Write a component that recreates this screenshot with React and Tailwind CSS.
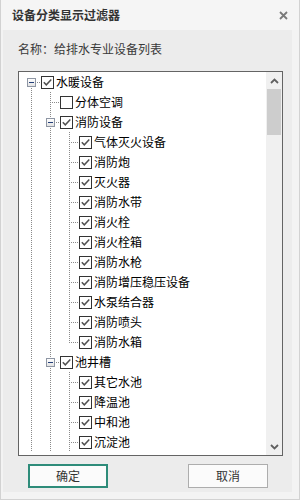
import React from "react";

const rows = [
  { level: 0, label: "水暖设备", exp: true, checked: true },
  { level: 1, label: "分体空调", checked: false },
  { level: 1, label: "消防设备", exp: true, checked: true },
  { level: 2, label: "气体灭火设备", checked: true },
  { level: 2, label: "消防炮", checked: true },
  { level: 2, label: "灭火器", checked: true },
  { level: 2, label: "消防水带", checked: true },
  { level: 2, label: "消火栓", checked: true },
  { level: 2, label: "消火栓箱", checked: true },
  { level: 2, label: "消防水枪", checked: true },
  { level: 2, label: "消防增压稳压设备", checked: true },
  { level: 2, label: "水泵结合器", checked: true },
  { level: 2, label: "消防喷头", checked: true },
  { level: 2, label: "消防水箱", checked: true },
  { level: 1, label: "池井槽", exp: true, checked: true },
  { level: 2, label: "其它水池", checked: true },
  { level: 2, label: "降温池", checked: true },
  { level: 2, label: "中和池", checked: true },
  { level: 2, label: "沉淀池", checked: true },
];

const spacer = ["w-[8px]", "w-[27px]", "w-[46px]"];

function CheckBox({ checked }) {
  return (
    <div className="w-[13px] h-[13px] border border-[#333333] bg-white flex-none relative">
      {checked && (
        <svg width="11" height="11" viewBox="0 0 11 11" className="absolute left-0 top-0">
          <path d="M1.8 5.2 L4.3 7.8 L9.3 2.6" fill="none" stroke="#505050" strokeWidth="1.5" />
        </svg>
      )}
    </div>
  );
}

function Expander() {
  return (
    <div className="w-[9px] h-[9px] border border-[#8e96a4] bg-gradient-to-b from-white to-[#e3e3e3] flex-none flex items-center justify-center">
      <div className="w-[5px] h-[1px] bg-[#243f7a]" />
    </div>
  );
}

function TreeLines() {
  const h = [];
  rows.forEach((r, i) => {
    const y = i * 20 + 10.5;
    if (r.level === 0) h.push([16, 22, y]);
    if (r.level === 1) h.push([31, 41, y]);
    if (r.level === 2) h.push([50, 60, y]);
  });
  const v = [
    [12.5, 10, 380],
    [31.5, 20, 380],
    [50.5, 60, 271],
    [50.5, 300, 380],
  ];
  return (
    <svg width="247" height="380" className="absolute left-0 top-0" shapeRendering="crispEdges">
      {v.map(([x, y1, y2], i) => (
        <line key={"v" + i} x1={x} y1={y1} x2={x} y2={y2} stroke="#8a8a8a" strokeWidth="1" strokeDasharray="1 1" />
      ))}
      {h.map(([x1, x2, y], i) => (
        <line key={"h" + i} x1={x1} y1={y} x2={x2} y2={y} stroke="#8a8a8a" strokeWidth="1" strokeDasharray="1 1" />
      ))}
    </svg>
  );
}

function Chevron({ up }) {
  return (
    <svg width="9" height="6" viewBox="0 0 9 6">
      <path d={up ? "M1 5 L4.5 1.5 L8 5" : "M1 1 L4.5 4.5 L8 1"} fill="none" stroke="#606060" strokeWidth="1.8" />
    </svg>
  );
}

export default function App() {
  return (
    <div className="w-[300px] h-[500px] bg-[#f3f3f3] border-l border-r border-b border-[#d2d2d2] flex flex-col font-['Noto_Sans_CJK_SC',sans-serif] text-[#333333] overflow-hidden">
      <div className="h-[30px] flex-none flex items-center justify-between pl-[11px] pr-[11px] bg-[#f5f5f5]">
        <div className="text-[12px] font-bold leading-none">设备分类显示过滤器</div>
        <svg width="9" height="9" viewBox="0 0 9 9">
          <path d="M1 1 L8 8 M8 1 L1 8" stroke="#7a7a7a" strokeWidth="1.8" />
        </svg>
      </div>
      <div className="ml-[2px] w-[289px] h-[462px] bg-[#ececec] flex flex-col pl-[15px]">
        <div className="mt-[9px] h-[20px] flex items-center text-[12px] text-[#3a3a3a]">名称：给排水专业设备列表</div>
        <div className="mt-[12px] w-[265px] h-[385px] border border-[#646464] bg-white flex">
          <div className="w-[247px] h-[383px] relative overflow-hidden">
            <TreeLines />
            <div className="relative flex flex-col">
              {rows.map((r, i) => (
                <div key={i} className="h-[20px] flex items-center">
                  <div className={spacer[r.level] + " flex-none"} />
                  {r.exp ? <Expander /> : <div className="w-[9px] flex-none" />}
                  <div className="w-[5px] flex-none" />
                  <CheckBox checked={r.checked} />
                  <div className="ml-[2px] text-[12px] leading-[20px] text-black whitespace-nowrap">{r.label}</div>
                </div>
              ))}
            </div>
          </div>
          <div className="w-[16px] h-[383px] bg-[#f0f0f0] flex flex-col">
            <div className="h-[17px] flex items-center justify-center">
              <Chevron up />
            </div>
            <div className="h-[46px] mx-[1px] bg-[#cdcdcd]" />
            <div className="flex-1" />
            <div className="h-[17px] flex items-center justify-center">
              <Chevron />
            </div>
          </div>
        </div>
        <div className="mt-[8px] flex pl-[10px] gap-[80px]">
          <div className="w-[80px] h-[24px] border-2 border-[#2e8c7a] bg-[#fbfbfb] flex items-center justify-center text-[12px] text-[#333333]">确定</div>
          <div className="w-[80px] h-[24px] border border-[#adadad] bg-[#fbfbfb] flex items-center justify-center text-[12px] text-[#333333]">取消</div>
        </div>
      </div>
    </div>
  );
}
